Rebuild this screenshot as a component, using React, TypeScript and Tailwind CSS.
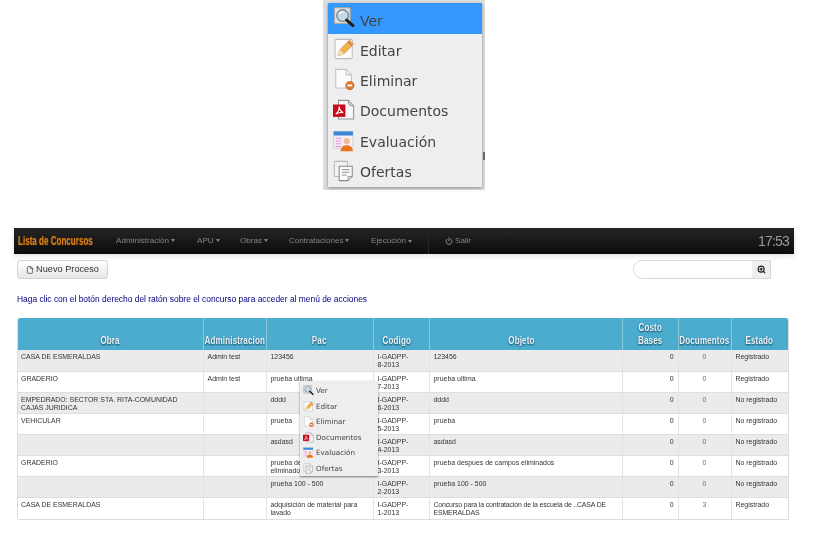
import { File, Power, ZoomIn } from "lucide-react"

type IconName = "ver" | "editar" | "eliminar" | "documentos" | "evaluacion" | "ofertas"

function MenuIcon({ name, size }: { name: IconName; size: number }) {
  return (
    <svg width={size} height={size} viewBox="0 0 32 32" className="shrink-0">
      {name === "ver" && (
        <>
          <rect x="2" y="1" width="23" height="23" rx="1.5" fill="#e0e0e0" stroke="#a6a6a6" strokeWidth="1.5" />
          <circle cx="14" cy="12.5" r="8.5" fill="#c3dbe8" stroke="#7c8b93" strokeWidth="2" />
          <path d="M9.5 10a5 5 0 0 1 6-2.5" fill="none" stroke="#fff" strokeWidth="2" />
          <path d="M20 19l9 8" stroke="#1c1c1c" strokeWidth="4.5" strokeLinecap="round" />
        </>
      )}
      {name === "editar" && (
        <>
          <rect x="3" y="2" width="25" height="28" rx="1.5" fill="#fbfbfb" stroke="#bdbdbd" strokeWidth="1.5" />
          <path d="M7 26l3-9L24 3l6 6-14 14z" fill="#efb24c" stroke="#c08a34" strokeWidth="0.8" />
          <path d="M7 26l3-9 6 6z" fill="#f5e0b4" />
          <path d="M22 5l6 6" stroke="#dc7a50" strokeWidth="2.5" />
        </>
      )}
      {name === "eliminar" && (
        <>
          <path d="M4 2h15l8 8v19H4z" fill="#fcfcfc" stroke="#c2c2c2" strokeWidth="1.5" />
          <path d="M19 2v8h8" fill="#ececec" stroke="#c2c2c2" strokeWidth="1.5" />
          <circle cx="24.5" cy="25.5" r="6" fill="#e2752c" stroke="#bd5c20" strokeWidth="1" />
          <rect x="21" y="24" width="7" height="2.8" fill="#fff" />
        </>
      )}
      {name === "documentos" && (
        <>
          <path d="M8 2h14l8 8v19H8z" fill="#f6f6f6" stroke="#959595" strokeWidth="1.5" />
          <path d="M22 2c0 5 3 8 8 8" fill="none" stroke="#959595" strokeWidth="1.5" />
          <rect x="0" y="8" width="18" height="18" fill="#c8091a" />
          <path d="M4 22c3-2 5-7 5-11 0 4 2 7 6 9-4-1-8 0-11 2z" fill="none" stroke="#fff" strokeWidth="1.6" />
        </>
      )}
      {name === "evaluacion" && (
        <>
          <rect x="1" y="2" width="28" height="25" fill="#f3eef2" stroke="#c9c9d4" strokeWidth="1" />
          <rect x="1" y="2" width="28" height="6" fill="#3c86d8" />
          <path d="M4 12h8M4 16h8M4 20h8M4 24h8" stroke="#e58ddc" strokeWidth="1.6" />
          <circle cx="20" cy="16" r="4.5" fill="#eebb96" />
          <path d="M11 31c0-6 4-9 9-9s9 3 9 9z" fill="#e8761e" />
        </>
      )}
      {name === "ofertas" && (
        <>
          <rect x="2" y="2" width="19" height="22" rx="1" fill="#f2f2f2" stroke="#b9b9b9" strokeWidth="1.5" />
          <path d="M9 9h19v15l-6 6H9z" fill="#fafafa" stroke="#8a8a8a" strokeWidth="1.5" />
          <path d="M13 14h11M13 18h11M13 22h7" stroke="#a8a8a8" strokeWidth="1.5" />
          <path d="M22 30v-6h6" fill="#dedede" stroke="#8a8a8a" strokeWidth="1.2" />
        </>
      )}
    </svg>
  )
}

const menuItems: { name: IconName; label: string }[] = [
  { name: "ver", label: "Ver" },
  { name: "editar", label: "Editar" },
  { name: "eliminar", label: "Eliminar" },
  { name: "documentos", label: "Documentos" },
  { name: "evaluacion", label: "Evaluación" },
  { name: "ofertas", label: "Ofertas" },
]

function BigMenu() {
  return (
    <div className="w-[154px] bg-[#eeeeee] shadow-[0_1px_3px_rgba(0,0,0,0.4)] font-['DejaVu_Sans',sans-serif] text-[14px] text-[#444]">
      {menuItems.map((m, i) => (
        <div key={m.name} className={`flex h-[30.6px] items-center gap-[5px] pl-[5px] ${i === 0 ? "bg-[#3399ff]" : ""}`}>
          <MenuIcon name={m.name} size={22} />
          <span className={i === 0 ? "pt-[7px]" : i < 3 ? "pt-[5px]" : "pt-[3px]"}>{m.label}</span>
        </div>
      ))}
    </div>
  )
}

function SmallMenu() {
  return (
    <div className="absolute left-[300px] top-[381px] w-[78px] bg-[#eeeeee] pt-[2px] shadow-[0_1px_2px_rgba(0,0,0,0.45)] font-['DejaVu_Sans',sans-serif] text-[7.2px] text-[#444]">
      {menuItems.map((m) => (
        <div key={m.name} className="flex h-[15.5px] items-center gap-[2px] pl-[3px]">
          <MenuIcon name={m.name} size={11} />
          <span className="pt-[2px]">{m.label}</span>
        </div>
      ))}
    </div>
  )
}

const navItems = [
  { label: "Administración", cls: "ml-[23px] w-[81px]" },
  { label: "APU", cls: "w-[43px]" },
  { label: "Obras", cls: "w-[49px]" },
  { label: "Contrataciones", cls: "w-[82px]" },
  { label: "Ejecución", cls: "mr-[16px] h-full w-[58px] border-r border-[#262626]" },
]

const rows = [
  { obra: "CASA DE ESMERALDAS", admin: "Admin test", pac: "123456", n: 8, objeto: "123456", docs: 0, estado: "Registrado" },
  { obra: "GRADERIO", admin: "Admin test", pac: "prueba ultima", n: 7, objeto: "prueba ultima", docs: 0, estado: "Registrado" },
  { obra: "EMPEDRADO: SECTOR STA. RITA-COMUNIDAD CAJAS JURIDICA", admin: "", pac: "dddd", n: 6, objeto: "dddd", docs: 0, estado: "No registrado" },
  { obra: "VEHICULAR", admin: "", pac: "prueba", n: 5, objeto: "prueba", docs: 0, estado: "No registrado" },
  { obra: "", admin: "", pac: "asdasd", n: 4, objeto: "asdasd", docs: 0, estado: "No registrado" },
  { obra: "GRADERIO", admin: "", pac: "prueba despues de campos eliminados", n: 3, objeto: "prueba despues de campos eliminados", docs: 0, estado: "No registrado" },
  { obra: "", admin: "", pac: "prueba 100 - 500", n: 2, objeto: "prueba 100 - 500", docs: 0, estado: "No registrado" },
  { obra: "CASA DE ESMERALDAS", admin: "", pac: "adquisición de material para lavado", n: 1, objeto: "Concurso para la contratación de la escuela de ..CASA DE ESMERALDAS", docs: 3, estado: "Registrado" },
]

const headers = [
  { label: "Obra", cls: "w-[185px]" },
  { label: "Administracion", cls: "w-[63px]" },
  { label: "Pac", cls: "w-[107px]" },
  { label: "Codigo", cls: "w-[56px] pr-[8px]" },
  { label: "Objeto", cls: "w-[193px] pr-[9px]" },
  { label: "Costo Bases", cls: "w-[56px]" },
  { label: "Documentos", cls: "w-[53px]" },
  { label: "Estado", cls: "w-[57px]" },
]

const td = "border-r border-[#e4e4e4] px-[4px] pt-[3px] align-top last:border-r-0"

export default function App() {
  return (
    <div className="relative h-[542px] w-[814px] overflow-hidden bg-white font-['Liberation_Sans',sans-serif] blur-[0.4px]">
      {/* captura ampliada del menu */}
      <div className="relative ml-[323px] h-[190px] w-[162px] bg-[#dedede] px-[5px] pt-[3px]">
        <BigMenu />
        <div className="absolute left-[160px] top-[152px] h-[8px] w-[2px] bg-[#6b6a5a]" />
      </div>

      <div className="ml-[14px] mt-[38px] flex h-[26px] w-[780px] items-center bg-gradient-to-b from-[#262626] to-[#0b0b0b] pr-[5px] text-[8.1px] text-[#858585] shadow-[0_2px_6px_rgba(0,0,0,0.12)]">
        <span className="ml-[4px] w-[75px] origin-left scale-x-[0.62] whitespace-nowrap text-[13px] font-bold text-[#d9831c] [text-shadow:0_0_2px_#7a3c00]">
          Lista de Concursos
        </span>
        {navItems.map((n) => (
          <span key={n.label} className={`flex items-center ${n.cls}`}>
            {n.label}
            <span className="ml-[2px] h-0 w-0 border-x-[2.5px] border-t-[3px] border-x-transparent border-t-[#858585]" />
          </span>
        ))}
        <span className="flex items-center gap-[2px]">
          <Power size={8} strokeWidth={3} />
          Salir
        </span>
        <span className="ml-auto text-[14px] tracking-[-0.8px] text-[#9a9a9a]">17:53</span>
      </div>

      <div className="ml-[17px] mt-[6px] flex h-[19px] w-[754px] items-center justify-between">
        <div className="flex h-full w-[91px] items-center justify-center gap-[2px] rounded-[3px] border border-[#d2d2d2] bg-gradient-to-b from-white to-[#e6e6e6] text-[9.2px] text-[#333]">
          <File size={8} />
          Nuevo Proceso
        </div>
        <div className="flex h-full w-[138px] overflow-hidden rounded-l-full rounded-r-[3px] border border-[#d8d8d8]">
          <div className="flex-1 bg-white" />
          <div className="flex w-[18px] items-center justify-center bg-[#eeeeee] text-[#222]">
            <ZoomIn size={9} strokeWidth={3} />
          </div>
        </div>
      </div>

      <p className="ml-[17px] mt-[15px] h-[10px] text-[8.42px] leading-[10px] text-[#000080]">
        Haga clic con el botón derecho del ratón sobre el concurso para acceder al menú de acciones
      </p>

      <div className="ml-[17px] mt-[14px] w-[772px] overflow-hidden rounded-t-[3px] rounded-bl-[3px] border-b border-l border-r border-[#dddddd]">
        <table className="w-full table-fixed border-collapse text-[6.95px] leading-[8px] text-[#333]">
          <thead>
            <tr className="h-[32px] bg-[#4bacce]">
              {headers.map((h) => (
                <th key={h.label} className={`${h.cls} border-r border-[#8ac8de] pb-[3px] align-bottom last:border-r-0`}>
                  <div className="flex justify-center">
                    <span className="w-min scale-x-[0.8] text-[10px] font-bold leading-[13px] tracking-[0.2px] text-[#e8f4f8] [text-shadow:0_1px_2px_#163a55]">
                      {h.label}
                    </span>
                  </div>
                </th>
              ))}
            </tr>
          </thead>
          <tbody>
            {rows.map((r, i) => (
              <tr key={r.n} className={`h-[21.1px] border-b border-[#dedede] last:border-b-0 ${i % 2 === 0 ? "bg-[#ebebeb]" : "bg-white"}`}>
                <td className={`${td} pl-[3px]`}>{r.obra}</td>
                <td className={td}>{r.admin}</td>
                <td className={td}>{r.pac}</td>
                <td className={td}>
                  I-GADPP-
                  <br />
                  {r.n}-2013
                </td>
                <td className={`${td} pr-[1px] ${r.n === 1 ? "tracking-[-0.15px]" : ""}`}>{r.objeto}</td>
                <td className={`${td} text-right`}>0</td>
                <td className={`${td} text-center text-[#3a7ca5]`}>{r.docs}</td>
                <td className={td}>{r.estado}</td>
              </tr>
            ))}
          </tbody>
        </table>
      </div>

      <SmallMenu />
    </div>
  )
}
